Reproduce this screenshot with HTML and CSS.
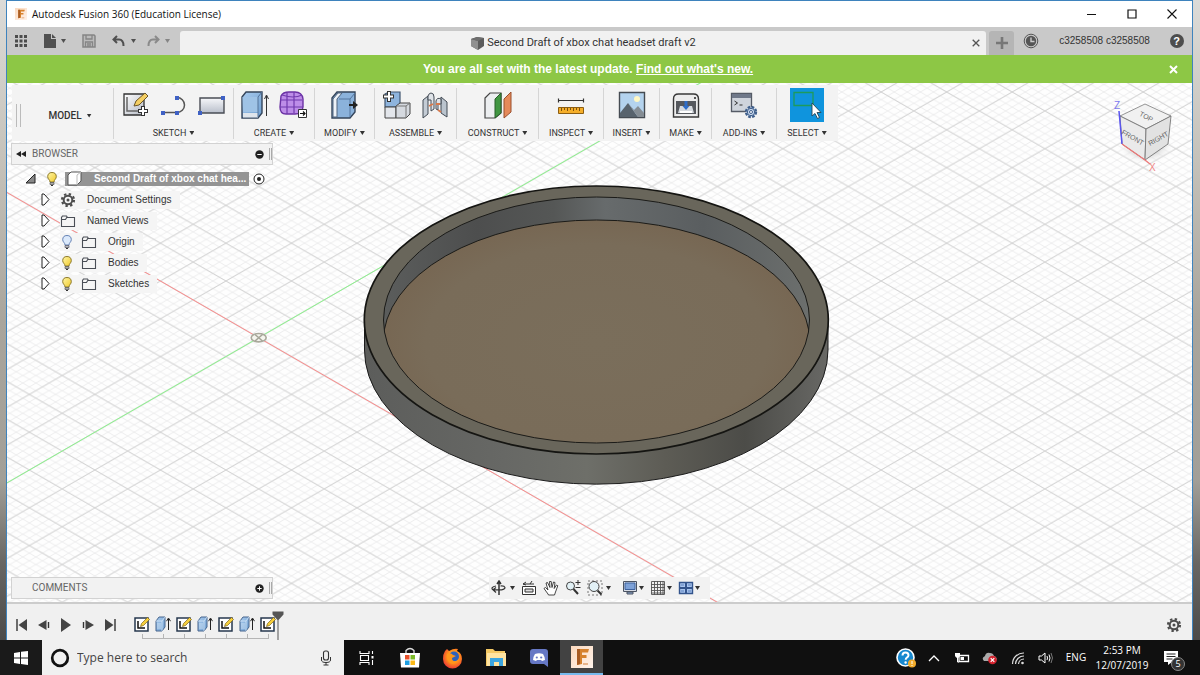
FILE: index.html
```html
<!DOCTYPE html>
<html lang="en">
<head>
<meta charset="utf-8">
<title>Autodesk Fusion 360 (Education License)</title>
<link rel="stylesheet" href="styles.css">
</head>
<body>
<svg class="defs" aria-hidden="true">
  <defs>
    <linearGradient id="gBlue" x1="0" y1="0" x2="1" y2="1"><stop offset="0" stop-color="#a9cbee"/><stop offset="1" stop-color="#6f9fd0"/></linearGradient>
    <linearGradient id="gGrey" x1="0" y1="0" x2="1" y2="1"><stop offset="0" stop-color="#ffffff"/><stop offset="1" stop-color="#b4b9c4"/></linearGradient>
    <linearGradient id="gPanel" x1="0" y1="0" x2="0" y2="1"><stop offset="0" stop-color="#f6f7fa"/><stop offset="1" stop-color="#b9bfcb"/></linearGradient>
    <linearGradient id="gBulb" x1="0" y1="0" x2="1" y2="1"><stop offset="0" stop-color="#fff6a8"/><stop offset="1" stop-color="#f0c929"/></linearGradient>
    <linearGradient id="gFusion" x1="0" y1="0" x2="1" y2="1"><stop offset="0" stop-color="#fbd9bf"/><stop offset="1" stop-color="#fff3ea"/></linearGradient>
    <radialGradient id="gFox" cx=".55" cy=".4" r=".7"><stop offset="0" stop-color="#ffd23c"/><stop offset=".5" stop-color="#ff8a1c"/><stop offset="1" stop-color="#e4203e"/></radialGradient>
  </defs>
  <symbol id="bulb" viewBox="0 0 12 16"><path d="M6 1.500a4.300 4.300 0 0 0-4.300 4.200C1.700 8 4 8.800 4 11h4c0-2.200 2.300-3 2.300-5.300A4.300 4.300 0 0 0 6 1.500z" fill="url(#gBulb)" stroke="#8d7a2a"/><path d="M4 11.500h4v2H4z" fill="#aaa" stroke="#555" stroke-width=".7"/><path d="M5 14.500h2" stroke="#333"/></symbol>
  <symbol id="bulbOff" viewBox="0 0 12 16"><path d="M6 1.500a4.300 4.300 0 0 0-4.300 4.200C1.700 8 4 8.800 4 11h4c0-2.200 2.300-3 2.300-5.300A4.300 4.300 0 0 0 6 1.500z" fill="#dbe9fb" stroke="#6582b5"/><path d="M4 11.500h4v2H4z" fill="#bbb" stroke="#556" stroke-width=".7"/><path d="M5 14.500h2" stroke="#333"/></symbol>
  <symbol id="folder" viewBox="0 0 16 14"><path d="M1.500 12.500v-9l1-1.500h4l1 1.500M1.500 5.500h4l1.200-2h7.800v9h-13z" fill="#f5f5f5" stroke="#4a4e56" stroke-width="1.100"/></symbol>
  <symbol id="closed" viewBox="0 0 9 13"><path d="M1 1h2l5 5.500L3 12H1z" fill="#fff" stroke="#222"/></symbol>
  <symbol id="gear" viewBox="0 0 16 16"><circle cx="8" cy="8" r="6" fill="none" stroke="#4d4d4d" stroke-width="2.200" stroke-dasharray="2.360 2.350"/><circle cx="8" cy="8" r="4.300" fill="none" stroke="#4d4d4d" stroke-width="2"/><circle cx="8" cy="8" r="1.500" fill="#4d4d4d"/></symbol>
  <symbol id="fusion" viewBox="0 0 22 22"><path d="M0 0h22v22H0z" fill="url(#gFusion)"/><path d="M6 3h12l-1 3.500h-6V9h4.500v3H11v6l-5 1z" fill="#d6822e"/><path d="M6 3h3v15l-3 1z" fill="#a85b22"/><path d="M12 17h5v2h-5z" fill="#e8b48a"/></symbol>
  <symbol id="tlSketch" viewBox="0 0 16 16"><path d="M1 2h13v13H1z" fill="#fff" stroke="#26374d" stroke-width="1.500"/><path d="M4 5v7h7" fill="none" stroke="#111" stroke-width="1.500"/><path d="M6.500 10.500l1-3 6-6 2 2-6 6z" fill="#f6ce3b" stroke="#7a631b" stroke-width=".7"/></symbol>
  <symbol id="tlBox" viewBox="0 0 16 16"><path d="M1 5l3-4h6v10l-3 4H1z" fill="url(#gBlue)" stroke="#46658d"/><path d="M1 5h6v10M7 5l3-4M2 8h4m-4 2h4m-4 2h4" fill="none" stroke="#d7e7f7" stroke-width=".8"/><path d="M13.500 14V3m-2 2.200L13.500 2l2 3.200" fill="none" stroke="#222"/></symbol>
</svg>

<div class="desktop">
  <div class="window">
    <header class="titlebar">
      <svg class="app-icon"><use href="#fusion"/></svg>
      <span class="app-name">Autodesk Fusion 360 (Education License)</span>
      <button class="win-btn" aria-label="Minimize"><svg viewBox="0 0 10 10"><path d="M0 5.500h9" stroke="#111"/></svg></button>
      <button class="win-btn" aria-label="Maximize"><svg viewBox="0 0 10 10"><path d="M1 1h8v8H1z" fill="none" stroke="#111" stroke-width="1.200"/></svg></button>
      <button class="win-btn" aria-label="Close"><svg viewBox="0 0 10 10"><path d="M.5.500l9 9m0-9l-9 9" stroke="#111" stroke-width="1.100"/></svg></button>
    </header>

    <div class="tabbar">
      <div class="quick">
        <button class="q" aria-label="Data panel"><svg width="14" height="14" viewBox="0 0 14 14"><path d="M1 1h3v3H1zm4.500 0h3v3h-3zM10 1h3v3h-3zM1 5.500h3v3H1zm4.500 0h3v3h-3zm4.500 0h3v3h-3zM1 10h3v3H1zm4.500 0h3v3h-3zm4.500 0h3v3h-3z" fill="#4c4c4c"/></svg></button>
        <button class="q file" aria-label="File"><svg width="12" height="14" viewBox="0 0 12 14"><path d="M0 0h7v5h5v9H0z" fill="#505050"/><path d="M8 0l4 4H8z" fill="#505050"/></svg><i class="caret"></i></button>
        <button class="q save" aria-label="Save"><svg width="14" height="14" viewBox="0 0 14 14"><path d="M1 1h11l1 1v11H1z" fill="#bbb" stroke="#858585" stroke-width="1.500"/><path d="M4 1v4h6V1M3.500 13V8h7v5M5 10h4m-4 2h4" fill="none" stroke="#858585" stroke-width="1.300"/></svg></button>
        <button class="q undo" aria-label="Undo"><svg width="14" height="12" viewBox="0 0 14 12"><path d="M5 1L1.500 4.500 5 8M1.500 4.500H7c3 0 4.500 2 4.500 6.500" fill="none" stroke="#505050" stroke-width="2"/></svg><i class="caret"></i></button>
        <button class="q redo" aria-label="Redo"><svg width="14" height="12" viewBox="0 0 14 12"><path d="M9 1l3.500 3.500L9 8m3.500-3.500H7c-3 0-4.500 2-4.500 6.500" fill="none" stroke="#8a8a8a" stroke-width="2"/></svg><i class="caret"></i></button>
      </div>
      <div class="doc-tab">
        <svg width="15" height="15" viewBox="0 0 15 15"><path d="M1 3l6-2 7 1v8l-6 4-7-4z" fill="#5c5c5c"/><path d="M1 3l7 2v9l-7-4z" fill="#909090"/><path d="M1 3l6-2 7 1-6 3z" fill="#6e6e6e"/></svg>
        <span class="doc-title">Second Draft of xbox chat headset draft v2</span>
        <button class="tab-close" aria-label="Close tab"><svg width="8" height="8" viewBox="0 0 8 8"><path d="M.7.700l6.600 6.600m0-6.600L.7 7.300" stroke="#555" stroke-width="1.300"/></svg></button>
      </div>
      <button class="new-tab" aria-label="New tab"><svg width="12" height="12" viewBox="0 0 12 12"><path d="M6 0v12M0 6h12" stroke="#777" stroke-width="2.600"/></svg></button>
      <button class="status" aria-label="Job status"><svg width="16" height="16" viewBox="0 0 16 16"><circle cx="8" cy="8" r="6.800" fill="none" stroke="#555"/><circle cx="8" cy="8" r="5.200" fill="#555"/><path d="M8 4.500V8.500h3.500" fill="none" stroke="#ccc" stroke-width="1.400"/></svg></button>
      <button class="account">c3258508 c3258508</button>
      <button class="help" aria-label="Help"><b>?</b></button>
    </div>

    <div class="notice">
      <p>You are all set with the latest update. <a href="#new">Find out what's new.</a></p>
      <button class="notice-close" aria-label="Dismiss"><svg width="9" height="9" viewBox="0 0 9 9"><path d="M1 1l7 7m0-7L1 8" stroke="#fff" stroke-width="2"/></svg></button>
    </div>

    <main class="viewport">
      <svg class="scene" viewBox="7 83 1185 519" preserveAspectRatio="xMidYMid slice" aria-label="Model canvas">
        <defs>
          <pattern id="minor" patternUnits="userSpaceOnUse" x="258.700" y="337.700" width="13.104" height="7.560"><path d="M0 0l13.104 7.560M0 7.560L13.104 0" stroke="#e9e9ea" stroke-width=".8"/></pattern>
          <pattern id="major" patternUnits="userSpaceOnUse" x="258.700" y="337.700" width="65.520" height="37.800"><path d="M0 0l65.520 37.800M0 37.800L65.520 0" stroke="#cfcfcf" stroke-width=".9"/></pattern>
          <linearGradient id="side"><stop offset="0" stop-color="#5c5d5b"/><stop offset=".3" stop-color="#676865"/><stop offset=".48" stop-color="#6e6f69"/><stop offset=".65" stop-color="#5d5c55"/><stop offset=".82" stop-color="#4c4c48"/><stop offset="1" stop-color="#686865"/></linearGradient>
          <linearGradient id="wall"><stop offset="0" stop-color="#5b5d5c"/><stop offset=".22" stop-color="#4d4e4e"/><stop offset=".4" stop-color="#555756"/><stop offset=".52" stop-color="#676b6c"/><stop offset=".75" stop-color="#5a5e60"/><stop offset="1" stop-color="#6c6f6d"/></linearGradient>
          <radialGradient id="floor"><stop offset="0" stop-color="#7a6e5b"/><stop offset=".8" stop-color="#796c59"/><stop offset="1" stop-color="#776753"/></radialGradient>
          <clipPath id="bore"><ellipse cx="596.500" cy="320" rx="213" ry="123"/></clipPath>
        </defs>
        <rect x="-400" y="-400" width="2400" height="1600" fill="#fefefe"/>
        <rect x="-400" y="-400" width="2400" height="1600" fill="url(#minor)"/>
        <rect x="-400" y="-400" width="2400" height="1600" fill="url(#major)"/>
        <path d="M-400-42.300l1520 876.900" stroke="#fb8d8d"/>
        <path d="M-400 717.700L1120-159.200" stroke="#8df38d"/>
        <ellipse cx="258.700" cy="337.700" rx="7.500" ry="4.200" fill="#f5f5ee" stroke="#aaa99c" stroke-width="1.600"/>
        <path d="M255 334.500l7.500 6.500m0-6.500l-7.500 6.500" stroke="#a5a598" stroke-width="1.600"/>
        <path d="M364.500 320V350a231.500 134 0 0 0 463.500 0V320z" fill="url(#side)" stroke="#1c1c1c" stroke-width="1"/>
        <ellipse cx="596.300" cy="320" rx="232" ry="134" fill="#69665b" stroke="#151512" stroke-width="1.700"/>
        <g clip-path="url(#bore)">
          <rect x="383" y="196" width="427" height="248" fill="url(#wall)"/>
          <ellipse cx="596.500" cy="343" rx="213.500" ry="123" fill="url(#floor)" stroke="#1b1b18"/>
        </g>
        <ellipse cx="596.500" cy="320" rx="213" ry="123" fill="none" stroke="#1b1b18"/>
      </svg>

      <svg class="cube" width="64" height="80" viewBox="1112 96 64 80" aria-label="View cube">
        <defs><radialGradient id="shade"><stop offset="0" stop-color="#999"/><stop offset="1" stop-color="#fff" stop-opacity="0"/></radialGradient></defs>
        <ellipse cx="1146" cy="148" rx="29" ry="17" fill="url(#shade)"/>
        <path d="M1120 116l25-12 26 12-25 13z" fill="#f1f1f1" stroke="#888" stroke-width=".9"/>
        <path d="M1120 116l26 13-1 31-23-16z" fill="#eaeaea" stroke="#777" stroke-width=".9"/>
        <path d="M1171 116l-25 13-1 31 23-16z" fill="#e2e2e2" stroke="#777" stroke-width=".9"/>
        <path d="M1119 111l3 33" stroke="#5a55f0" stroke-width="1.500"/>
        <path d="M1122 144l23 16 5 4" fill="none" stroke="#e77" stroke-width="1.200"/>
        <text class="face" x="1133" y="140" text-anchor="middle" transform="rotate(29 1133 137)">FRONT</text>
        <text class="face" x="1158" y="141" text-anchor="middle" transform="rotate(-29 1158 138)">RIGHT</text>
        <text class="face" x="1146" y="119" text-anchor="middle" transform="rotate(27 1146 117)">TOP</text>
        <text class="axis axis-z" x="1114" y="109">Z</text>
        <text class="axis axis-x" x="1149" y="171">X</text>
      </svg>

      <nav class="toolbar" aria-label="Tools">
        <button class="workspace">MODEL<i class="caret"></i></button>
        <div class="group"><div class="icons">
          <svg width="28" height="28" viewBox="0 0 28 28"><path d="M2 3h20v21H2z" fill="url(#gGrey)" stroke="#333" stroke-width="1.300"/><path d="M5 6v14h13" fill="none" stroke="#666" stroke-width="1.500"/><path d="M12 15l2-5 9-8 3 3-9 9z" fill="#f5cf63" stroke="#6b5526"/><path d="M21 15v10m-5-5h10" stroke="#333" stroke-width="4"/><path d="M21 16v8m-4-4h8" stroke="#fff" stroke-width="2"/></svg>
          <svg width="28" height="28" viewBox="0 0 28 28"><path d="M3 21.500h14a7.500 7.500 0 1 0 0-15" fill="none" stroke="#555" stroke-width="1.500"/><path d="M1 20h4v4H1zm14 0h4v4h-4zm0-15h4v4h-4z" fill="#3f61c4"/></svg>
          <svg width="28" height="28" viewBox="0 0 28 28"><path d="M2 7h24v15H2z" fill="url(#gPanel)" stroke="#4a4d55" stroke-width="1.400"/><path d="M23 5h4v4h-4zM0 20h4v4H0z" fill="#3f61c4"/></svg>
        </div><button class="label">SKETCH<i class="caret"></i></button></div>
        <div class="group"><div class="icons">
          <svg width="28" height="28" viewBox="0 0 28 28"><path d="M1 6l4-5h16v21l-4 5H1z" fill="url(#gBlue)" stroke="#34445a" stroke-width="1.400"/><path d="M1.500 6H17v15H2z" fill="#9fc3e6"/><path d="M2 22h15v4.500H2z" fill="#dfe5ec"/><path d="M17 6v20M17 6l4-5" stroke="#537299"/><path d="M25.500 25V5m-2 3l2-4 2 4" fill="none" stroke="#333"/></svg>
          <svg width="28" height="28" viewBox="0 0 28 28"><path d="M2 5q2-4 8-4h6q7 0 8 7v8q-1 7-8 7H7q-6 0-6-7z" fill="#bd8de8" stroke="#6b32a4" stroke-width="1.400"/><path d="M1 9h22M1 16h23M8 2v21M15 1v21M3 4q12 4 20 0" fill="none" stroke="#713aae" stroke-width="1.200"/><path d="M19.500 18.500h8v8h-8z" fill="#fff" stroke="#333"/><path d="M21 22.500h5m-2-2l2 2-2 2" stroke="#111" fill="none" stroke-width="1.200"/></svg>
        </div><button class="label">CREATE<i class="caret"></i></button></div>
        <div class="group"><div class="icons">
          <svg width="28" height="28" viewBox="0 0 28 28"><path d="M1 7l5-6h18v20l-5 6H1z" fill="#8bb2db" stroke="#34445a" stroke-width="1.400"/><path d="M2 8l5-6h4L6 8v18H2z" fill="#edf2f8" stroke="#51657f"/><path d="M8 8h11v18M19 8l5-6" fill="none" stroke="#54779f"/><path d="M18 13h4v-3l5 4-5 4v-3h-4z" fill="#222"/></svg>
        </div><button class="label">MODIFY<i class="caret"></i></button></div>
        <div class="group"><div class="icons">
          <svg width="28" height="28" viewBox="0 0 28 28"><path d="M2 3l4-2h11v15H2z" fill="#8eb4dd" stroke="#405570" stroke-width="1.200"/><path d="M2 16h11v11H2z" fill="#e3e6eb" stroke="#444"/><path d="M13 15l4-3h10v11l-4 4H13z" fill="#d5d9df" stroke="#444"/><path d="M13 15h10v12m0-12l4-3" fill="none" stroke="#777"/><path d="M6 0v11M0 5.500h11" stroke="#333" stroke-width="4"/><path d="M6 1v9M1 5.500h9" stroke="#fff" stroke-width="2"/></svg>
          <svg width="28" height="28" viewBox="0 0 28 28"><path d="M2 9l5-4v18l-5 4z" fill="#c4ccd5" stroke="#434a54"/><path d="M7 5q1-3 3-3 3 0 3 4v12l-3 2V9H7z" fill="#dfe3e8" stroke="#434a54"/><path d="M26 11l-6-5v16l6 4z" fill="#bac4ce" stroke="#434a54"/><path d="M20 8q-4-2-5 2v8l2 1v-6h3z" fill="#dfe3e8" stroke="#434a54"/><path d="M8 15l4-2m3 0h4m-2 6l3 2" stroke="#d8794b" stroke-width="1.800"/></svg>
        </div><button class="label">ASSEMBLE<i class="caret"></i></button></div>
        <div class="group"><div class="icons">
          <svg width="28" height="28" viewBox="0 0 28 28"><path d="M1 7l5-5h11v20l-6 5H1z" fill="#eceef0" stroke="#444" stroke-width="1.200"/><path d="M11 8l6-6v20l-6 5z" fill="#419642" stroke="#285e2a"/><path d="M20 8l7-7v20l-7 6z" fill="#e58a5a" stroke="#9a4e2d"/></svg>
        </div><button class="label">CONSTRUCT<i class="caret"></i></button></div>
        <div class="group"><div class="icons">
          <svg width="28" height="28" viewBox="0 0 28 28"><path d="M1.500 9.500h25m-25-2v4m25-4v4" stroke="#333" stroke-width="1.200"/><path d="M1.500 16.500h25v6h-25z" fill="#f5ae29" stroke="#8c5e12"/><path d="M4.500 17v3m3-3v2m3-2v3m3-3v2m3-2v3m3-3v2m3-2v3" stroke="#7c5210"/></svg>
        </div><button class="label">INSPECT<i class="caret"></i></button></div>
        <div class="group"><div class="icons">
          <svg width="28" height="28" viewBox="0 0 28 28"><path d="M1.500 1.500h25v25h-25z" fill="#b4d3ee" stroke="#454b52" stroke-width="1.400"/><circle cx="19" cy="8" r="3" fill="#fff8c5"/><path d="M2 22l8-10 10 14H2z" fill="#58636d"/><path d="M10 12l10 14h6v-4l-6-7-4 4z" fill="#858d94"/></svg>
        </div><button class="label">INSERT<i class="caret"></i></button></div>
        <div class="group"><div class="icons">
          <svg width="28" height="28" viewBox="0 0 28 28"><path d="M1.500 8q0-5 5-5h15q5 0 5 5v18h-25z" fill="#ececec" stroke="#383838" stroke-width="1.400"/><path d="M4 10h20v13H4z" fill="#55585d"/><path d="M6 22l2-7h12l2 7z" fill="#d5d9de"/><path d="M12.500 10h3v5h2l-3.500 4-3.500-4h2z" fill="#2f6dc7"/><path d="M8 20h12v2H8z" fill="#fff"/><circle cx="23" cy="7" r="1" fill="#222"/></svg>
        </div><button class="label">MAKE<i class="caret"></i></button></div>
        <div class="group"><div class="icons">
          <svg width="28" height="28" viewBox="0 0 28 28"><path d="M1.500 2.500h20v18h-20z" fill="#cfd4dc" stroke="#555b66" stroke-width="1.300"/><path d="M2 3h19v4H2z" fill="#6f7889"/><path d="M4.500 10l3 2-3 2m5 0h3" fill="none" stroke="#333"/><circle cx="21" cy="21" r="5" fill="#c6d6ec" stroke="#41608c" stroke-width="2.400" stroke-dasharray="2.600 1.330"/><circle cx="21" cy="21" r="3.700" fill="#c6d6ec" stroke="#41608c"/><circle cx="21" cy="21" r="1.500" fill="#fff" stroke="#41608c"/></svg>
        </div><button class="label">ADD-INS<i class="caret"></i></button></div>
        <div class="group"><div class="icons">
          <svg width="34" height="34" viewBox="0 0 34 34"><path d="M0 0h34v34H0z" fill="#0f94dd"/><path d="M4 4.500h19v13H4z" fill="none" stroke="#1e9a5c" stroke-width="1.300"/><path d="M22 15v13l3-2.500 2.500 5 2-1-2.500-5h4z" fill="#fff" stroke="#245" stroke-width=".9"/></svg>
        </div><button class="label">SELECT<i class="caret"></i></button></div>
      </nav>

      <section class="browser">
        <header class="panel">
          <svg class="collapse" width="10" height="6" viewBox="0 0 10 6"><path d="M5 0v6L0 3zm5 0v6L5 3z" fill="#222"/></svg>
          <h2>BROWSER</h2>
          <button class="dot" aria-label="Collapse browser"><svg viewBox="0 0 9 9"><circle cx="4.500" cy="4.500" r="4.200" fill="#222"/><path d="M2.300 4.500h4.400" stroke="#fff"/></svg></button>
          <i class="grip"></i>
        </header>
        <ul class="tree">
          <li class="root">
            <svg width="11" height="11" viewBox="0 0 11 11"><path d="M10 1v9H1z" fill="#888" stroke="#222"/></svg>
            <svg class="lamp" width="12" height="16"><use href="#bulb"/></svg>
            <span class="root-name"><svg width="15" height="15" viewBox="0 0 15 15"><path d="M1 4l3-3h10v9l-4 4H1z" fill="#fff" stroke="#555"/><path d="M10 14V4l4-3" fill="none" stroke="#bbb"/></svg><b>Second Draft of xbox chat hea...</b></span>
            <svg width="12" height="12" viewBox="0 0 12 12"><circle cx="6" cy="6" r="5" fill="#fff" stroke="#222"/><circle cx="6" cy="6" r="2" fill="#222"/></svg>
          </li>
          <li><svg width="9" height="13"><use href="#closed"/></svg><span class="node"><svg width="16" height="16"><use href="#gear"/></svg>Document Settings</span></li>
          <li><svg width="9" height="13"><use href="#closed"/></svg><span class="node"><svg width="16" height="14"><use href="#folder"/></svg>Named Views</span></li>
          <li><svg width="9" height="13"><use href="#closed"/></svg><span class="node lit"><svg class="lamp" width="12" height="16"><use href="#bulbOff"/></svg><svg width="16" height="14"><use href="#folder"/></svg>Origin</span></li>
          <li><svg width="9" height="13"><use href="#closed"/></svg><span class="node lit"><svg class="lamp" width="12" height="16"><use href="#bulb"/></svg><svg width="16" height="14"><use href="#folder"/></svg>Bodies</span></li>
          <li><svg width="9" height="13"><use href="#closed"/></svg><span class="node lit"><svg class="lamp" width="12" height="16"><use href="#bulb"/></svg><svg width="16" height="14"><use href="#folder"/></svg>Sketches</span></li>
        </ul>
      </section>

      <div class="bottom">
        <section class="panel comments">
          <h2>COMMENTS</h2>
          <button class="dot" aria-label="Expand comments"><svg viewBox="0 0 9 9"><circle cx="4.500" cy="4.500" r="4.200" fill="#222"/><path d="M2.300 4.500h4.400M4.500 2.300v4.400" stroke="#fff"/></svg></button>
          <i class="grip"></i>
        </section>
        <nav class="navbar" aria-label="View controls">
          <button aria-label="Orbit"><svg width="16" height="16" viewBox="0 0 16 16"><path d="M8 2v13M6 4l2-3 2 3" fill="none" stroke="#333" stroke-width="1.500"/><path d="M9.500 6c5-.5 6.500 3 1 3.800H2M5 6C1 6.500 0 8.500 2 9.800M5 7.500L2 9.800l3 2.700" fill="none" stroke="#333" stroke-width="1.200"/></svg><i class="caret"></i></button>
          <button aria-label="Look at"><svg width="16" height="16" viewBox="0 0 16 16"><path d="M1.500 6.500h13v8h-13z" fill="#fff" stroke="#333"/><path d="M4 9h8v3H4z" fill="#ddd" stroke="#333"/><path d="M2 4h11M5 2L2 4l3 1M9 4l2-3" fill="none" stroke="#333"/></svg></button>
          <button aria-label="Pan"><svg width="16" height="16" viewBox="0 0 16 16"><path d="M5 14L1 8.500l1.500-1L5 10 3 3l1.500-.5L7 7.500 6.500 1.500h1.700L9 7.500 10.500 2l1.500.5-.8 6L13.500 5l1.300.7L12.500 12l-1 3H5.500z" fill="#fff" stroke="#333" stroke-width=".9"/></svg></button>
          <button aria-label="Zoom"><svg width="16" height="16" viewBox="0 0 16 16"><circle cx="5.500" cy="6" r="4" fill="#e2f1f6" stroke="#444"/><path d="M8.500 9l4.500 5" stroke="#333" stroke-width="2"/><path d="M13 0v5m-2.500-2.500h5m-5 5h5" stroke="#333"/></svg></button>
          <button aria-label="Fit"><svg width="16" height="16" viewBox="0 0 16 16"><path d="M1 1h14v14H1z" fill="none" stroke="#777" stroke-dasharray="2 2"/><circle cx="7" cy="6.500" r="5" fill="#e2f1f6" stroke="#444"/><path d="M10.500 10.500l4 4" stroke="#333" stroke-width="2"/></svg><i class="caret"></i></button>
          <button class="tight apart" aria-label="Display settings"><svg width="16" height="16" viewBox="0 0 16 16"><path d="M1.500 1.500h13v10h-13z" fill="#d7dce5" stroke="#4c5463"/><path d="M3 3h10v6.500H3z" fill="#7ea2d8" stroke="#3d629e"/><path d="M5 12h6v2H5z" fill="#8ba6ce" stroke="#4c5463"/></svg><i class="caret"></i></button>
          <button class="tight" aria-label="Grid and snaps"><svg width="16" height="16" viewBox="0 0 16 16"><path d="M1.500 1.500h13v13h-13zM4.500 1v14M7.500 1v14M10.500 1v14M1 4.500h14M1 7.500h14M1 10.500h14M13 1v14M1 13h14" fill="none" stroke="#555" stroke-width=".9"/></svg><i class="caret"></i></button>
          <button class="tight" aria-label="Viewports"><svg width="16" height="16" viewBox="0 0 16 16"><path d="M1.500 2.500h13v11h-13z" fill="#a9c5ef" stroke="#33548c" stroke-width="1.400"/><path d="M8 2v12M1 8h14" stroke="#33548c" stroke-width="2"/><path d="M3 5h3m4 0h3m-10 6h3m4 0h3" stroke="#5b80bb"/></svg><i class="caret"></i></button>
        </nav>
      </div>
    </main>

    <footer class="timeline">
      <div class="player">
        <button aria-label="Go to start"><svg width="12" height="12" viewBox="0 0 12 12"><path d="M1 0v12" stroke="#333" stroke-width="1.400"/><path d="M11 0v12L2.500 6z" fill="#444"/></svg></button>
        <button aria-label="Step back"><svg width="12" height="12" viewBox="0 0 12 12"><path d="M8.500 1v10L0 6z" fill="#444"/><path d="M10.500 3v6" stroke="#333" stroke-width="1.400"/></svg></button>
        <button aria-label="Play"><svg width="12" height="14" viewBox="0 0 12 14"><path d="M1 0v14l10-7z" fill="#444"/></svg></button>
        <button aria-label="Step forward"><svg width="12" height="12" viewBox="0 0 12 12"><path d="M3.500 1v10L12 6z" fill="#444"/><path d="M1.500 3v6" stroke="#333" stroke-width="1.400"/></svg></button>
        <button aria-label="Go to end"><svg width="12" height="12" viewBox="0 0 12 12"><path d="M11 0v12" stroke="#333" stroke-width="1.400"/><path d="M1 0v12l8.500-6z" fill="#444"/></svg></button>
      </div>
      <div class="history">
        <ol class="features">
          <li><svg><use href="#tlSketch"/></svg></li><li><svg><use href="#tlBox"/></svg></li>
          <li><svg><use href="#tlSketch"/></svg></li><li><svg><use href="#tlBox"/></svg></li>
          <li><svg><use href="#tlSketch"/></svg></li><li><svg><use href="#tlBox"/></svg></li>
          <li><svg><use href="#tlSketch"/></svg></li>
        </ol>
        <svg class="marker" width="12" height="29" viewBox="0 0 12 29"><path d="M.5.500h11v3L6.500 9V29h-1V9L.5 3.500z" fill="#555"/></svg>
      </div>
      <button class="prefs" aria-label="Timeline settings"><svg width="16" height="16"><use href="#gear"/></svg></button>
    </footer>
  </div>
</div>

<div class="taskbar">
  <button class="start" aria-label="Start"><svg width="16" height="16" viewBox="0 0 16 16"><path d="M1 3l6-1v5.500H1zm7-1.200L15 1v6.500H8zM1 8.500h6V14l-6-1zm7 0h7V15l-7-1z" fill="#fff"/></svg></button>
  <label class="search">
    <svg width="20" height="20" viewBox="0 0 20 20"><circle cx="10" cy="10" r="7.800" fill="none" stroke="#111" stroke-width="2.700"/></svg>
    <input type="text" placeholder="Type here to search" aria-label="Search">
    <svg width="12" height="16" viewBox="0 0 12 16"><rect x="3.500" y="1" width="5" height="9" rx="2" fill="none" stroke="#333" stroke-width="1.100"/><path d="M1.500 7v3q0 2.500 4.500 2.500t4.500-2.500V7M6 12.500V15M3.500 15h5" fill="none" stroke="#333"/></svg>
  </label>
  <div class="apps">
    <button aria-label="Task view"><svg width="18" height="18" viewBox="0 0 18 18"><path d="M2 2v2.500h9V2M2 16v-2.500h9V16M2.500 6.500h8v5h-8zM14.500 2v3m0 6v5" fill="none" stroke="#fff" stroke-width="1.100"/><path d="M13.500 7h2v2.500h-2z" fill="#fff"/></svg></button>
    <button aria-label="Store"><svg width="22" height="22" viewBox="0 0 22 22"><path d="M7 6V3.500q4-4 8 0V6" fill="none" stroke="#ddd" stroke-width="1.300"/><path d="M1 6h20l-1 14.500H2z" fill="#fff"/><path d="M6 8h4.500v4.500H6z" fill="#e8502a"/><path d="M11.500 8H16v4.500h-4.500z" fill="#7cba28"/><path d="M6 13.500h4.500V18H6z" fill="#1d9fe2"/><path d="M11.500 13.500H16V18h-4.500z" fill="#fbb917"/></svg></button>
    <button aria-label="Firefox"><svg width="22" height="22" viewBox="0 0 22 22"><path d="M3 4l2-2 2 2q5-3 9-2l-1 2q5 2 5 8a9.500 9.500 0 0 1-19 0Q1 7 3 4z" fill="url(#gFox)"/><circle cx="12" cy="9.500" r="5" fill="#2d62bd"/><path d="M5 7q4-2 6 1l3 1-4 2q0 4 5 3-3 4-7 2-4-3-3-9z" fill="#ff971c"/></svg></button>
    <button aria-label="File Explorer"><svg width="22" height="20" viewBox="0 0 22 20"><path d="M1 1h7l2 2h10v15H1z" fill="#f4c864"/><path d="M2 5h19v13H2z" fill="#ffe3a0"/><path d="M5 10h13v8h-4v-4H9v4H5z" fill="#3ba5df"/></svg></button>
    <button aria-label="Discord"><svg width="20" height="20" viewBox="0 0 20 20"><path d="M4 1h12q3 0 3 3v15l-4-3H4q-3 0-3-3V4q0-3 3-3z" fill="#6678c5"/><path d="M6 6q4-1.500 8 0 2 3 2 6l-3 1-1-1H8l-1 1-3-1q0-3 2-6z" fill="#fff"/><circle cx="7.800" cy="9.500" r="1.100" fill="#6678c5"/><circle cx="12.200" cy="9.500" r="1.100" fill="#6678c5"/></svg></button>
    <button class="running" aria-label="Fusion 360"><svg width="22" height="22"><use href="#fusion"/></svg></button>
  </div>
  <div class="tray">
    <button aria-label="Get help"><svg width="20" height="20" viewBox="0 0 20 20"><circle cx="9.500" cy="9.500" r="8.500" fill="#1788cf" stroke="#fff" stroke-width="1.600"/><path d="M6.500 7.500q0-3 3-3t3 2.800q0 1.500-1.500 2.200-1.300.8-1.300 2.300" fill="none" stroke="#fff" stroke-width="2"/><circle cx="9.600" cy="14.500" r="1.200" fill="#fff"/><circle cx="16" cy="15.500" r="4" fill="#f2ac2c"/><path d="M16 13v3m0 1v1" stroke="#fff"/></svg></button>
    <button aria-label="Show hidden icons"><svg width="12" height="8" viewBox="0 0 12 8"><path d="M1 7l5-5 5 5" fill="none" stroke="#fff" stroke-width="1.300"/></svg></button>
    <button aria-label="Battery"><svg width="16" height="12" viewBox="0 0 16 12"><path d="M5 3.500h9.500v6H5z" fill="none" stroke="#fff" stroke-width="1.300"/><path d="M6.500 5H10v3H6.500zM1 1h5v3q-1 2-2.500 2T1 4z" fill="#fff"/><path d="M3.500 5v5H5" stroke="#fff" fill="none"/></svg></button>
    <button aria-label="OneDrive"><svg width="16" height="14" viewBox="0 0 16 14"><path d="M2 10q-3-3 1-5 1-4 5-3 3 0 4 3 4 1 2 5z" fill="#aaa"/><circle cx="10.500" cy="9" r="4.300" fill="#d4222e"/><path d="M8.700 7.200l3.600 3.600m0-3.600l-3.600 3.600" stroke="#fff" stroke-width="1.200"/></svg></button>
    <button aria-label="Network"><svg width="14" height="14" viewBox="0 0 14 14"><path d="M1.500 13A11 11 0 0 1 13 2M4.500 13A8.500 8.500 0 0 1 13 5M7.500 13A5.500 5.500 0 0 1 13 8" fill="none" stroke="#ddd" stroke-width="1.200"/><circle cx="11.500" cy="12" r="1.300" fill="#ddd"/></svg></button>
    <button aria-label="Volume"><svg width="16" height="12" viewBox="0 0 16 12"><path d="M1 4h2.500L7 1v10L3.500 8H1z" fill="none" stroke="#fff"/><path d="M9 4q1 2 0 4m2-5.500q2 3.500 0 7" fill="none" stroke="#fff"/><path d="M13 1q3 5 0 10" fill="none" stroke="#777"/></svg></button>
    <button class="lang">ENG</button>
    <button class="clock"><time>2:53 PM</time><time>12/07/2019</time></button>
    <button class="alerts" aria-label="5 notifications"><svg width="16" height="16" viewBox="0 0 16 16"><path d="M1 1h14v11H9l-4 3v-3H1z" fill="#fff"/><path d="M3.500 4h9m-9 2.500h9m-9 2.500h6" stroke="#222"/></svg><span class="badge">5</span></button>
  </div>
</div>
</body>
</html>
```
FILE: styles.css
```css
* { box-sizing: border-box; }
body {
  margin: 0;
  height: 100vh;
  display: flex;
  flex-direction: column;
  overflow: hidden;
  font: 10px/12px "Liberation Sans", Arial, sans-serif;
  color: #333;
}
button {
  display: inline-flex;
  align-items: center;
  justify-content: center;
  padding: 0;
  border: 0;
  background: none;
  color: inherit;
  font: inherit;
}
svg { display: block; flex: none; }
h2, p, ul, ol { margin: 0; padding: 0; }
ul, ol { list-style: none; }
.defs { position: absolute; width: 0; height: 0; }
.caret {
  width: 5px;
  height: 4px;
  flex: none;
  background: currentColor;
  clip-path: polygon(0 0, 100% 0, 50% 100%);
}

.desktop {
  flex: 1;
  min-height: 0;
  display: flex;
  padding: 0 7px 0 6px;
  background: linear-gradient(#dcdbd8, #c5c2ba 25%, #a9a59c 50%, #a29f98 75%, #686663 88%, #4b4a49);
}
.window {
  flex: 1;
  min-width: 0;
  display: flex;
  flex-direction: column;
  border: 1px solid #3e83bd;
  border-bottom: 0;
  background: #f0f0f0;
}

.titlebar {
  flex: none;
  display: flex;
  align-items: center;
  height: 26px;
  background: #fff;
  color: #111;
  font: 10px/16px "Open Sans", "Noto Sans", sans-serif;
}
.app-icon { width: 12px; height: 12px; margin: 0 5px 0 8px; }
.app-name { flex: 1; }
.win-btn { width: 40px; height: 26px; }
.win-btn svg { width: 10px; height: 10px; }

.tabbar {
  flex: none;
  display: flex;
  align-items: flex-end;
  height: 28px;
  background: #c9c9c9;
}
.quick { flex: none; display: flex; align-items: center; width: 173px; height: 28px; padding-left: 7px; color: #505050; }
.q { gap: 5px; }
.q.file { margin-left: 16px; }
.q.save { margin-left: 16px; color: #858585; }
.q.undo { margin-left: 16px; }
.q.redo { margin-left: 10px; color: #858585; }
.doc-tab {
  flex: 1;
  display: flex;
  align-items: center;
  justify-content: center;
  gap: 2px;
  height: 24px;
  position: relative;
  border-radius: 3px 3px 0 0;
  background: #f1f1f1;
  color: #333;
}
.doc-title { font: 11px/14px Roboto, sans-serif; }
.tab-close { position: absolute; right: 6px; top: 8px; }
.new-tab { width: 25px; height: 24px; margin-left: 3px; border-radius: 3px 3px 0 0; background: #b5b5b5; }
.status { width: 34px; height: 28px; }
.account { width: 113px; height: 28px; }
.help { width: 31px; height: 28px; }
.help b { width: 14px; height: 14px; border-radius: 50%; background: #4d4d4d; color: #fff; font-size: 11px; line-height: 14px; }

.notice {
  flex: none;
  display: flex;
  align-items: center;
  height: 28px;
  padding-right: 14px;
  background: #8dc745;
  color: #fff;
  font-weight: bold;
  font-size: 12px;
}
.notice p { flex: 1; text-align: center; }
.notice a { color: inherit; }

.viewport {
  flex: 1;
  min-height: 0;
  display: flex;
  flex-direction: column;
  position: relative;
  border-bottom: 2px solid #ccc;
}
.scene { position: absolute; inset: 0; width: 100%; height: 100%; }
.cube { position: absolute; right: 16px; top: 13px; }
.face { font-size: 7px; fill: #666; }
.axis { font-size: 10px; }
.axis-z { fill: #7c78ee; }
.axis-x { fill: #ee8585; }

.toolbar {
  position: relative;
  flex: none;
  display: grid;
  grid-template-columns: 106px 120px 81px 60px 82px 82px 65px 56px 52px 65px 61px;
  height: 60px;
  padding: 5px 0;
  font: 10px/12px Roboto, sans-serif;
}
.toolbar::before { content: ""; position: absolute; inset: 2px auto 2px 5px; width: 826px; background: #f3f3f3; }
.toolbar > * { position: relative; }
.workspace { gap: 5px; margin: 16px 0 12px 9px; border-left: 1px solid #bbb; padding-left: 10px; font-weight: 500; }
.workspace::before { content: ""; position: absolute; left: 3px; top: 0; bottom: 0; width: 1px; background: #bbb; }
.group { display: flex; flex-direction: column; align-items: center; border-left: 1px solid #d5d5d5; }
.icons { display: flex; align-items: center; justify-content: center; gap: 10px; height: 34px; }
.label { gap: 3px; margin-top: 5px; font-size: 9px; }

.browser { position: relative; width: 262px; margin-left: 4px; }
.panel {
  display: flex;
  align-items: center;
  height: 22px;
  padding-left: 4px;
  border: 1px solid #d2d2d2;
  background: #f2f2f2;
}
.panel h2 { flex: 1; font: 10px/12px Roboto, sans-serif; color: #666; }
.collapse { margin-right: 6px; }
.dot svg { width: 9px; height: 9px; }
.grip { width: 3px; height: 12px; margin-left: 5px; border: solid #aaa; border-width: 0 1px; }
.tree { padding-top: 3px; }
.tree li { display: flex; align-items: center; height: 21px; padding-left: 30px; gap: 10px; }
.tree .root { padding-left: 14px; }
.root .lamp { margin-right: -3px; }
.root-name { display: flex; align-items: center; gap: 12px; width: 184px; height: 14px; padding-left: 2px; margin-right: -6px; background: #949494; color: #fff; }
.root-name b { white-space: nowrap; }
.node { display: flex; align-items: center; gap: 11px; height: 18px; padding-right: 8px; background: #f5f5f5; }
.lit .lamp { margin: 0 -3px 0 1px; }

.bottom {
  position: relative;
  display: grid;
  grid-template-columns: 1fr auto 1fr;
  margin-top: auto;
  padding-bottom: 3px;
}
.comments { width: 262px; margin-left: 4px; padding-left: 20px; }
.navbar { display: flex; align-items: center; height: 22px; padding: 0 10px 0 2px; gap: 6px; background: #f2f2f2; }
.navbar button { gap: 3px; }
.navbar .tight { gap: 1px; }
.navbar .apart { margin-left: 5px; }

.timeline { flex: none; display: flex; align-items: center; height: 36px; padding: 5px 10px 0 9px; }
.player { display: flex; gap: 10px; }
.history { position: relative; margin-left: 18px; }
.features { display: flex; gap: 5px; }
.features li { position: relative; width: 16px; height: 31px; padding-top: 7px; }
.features li svg { width: 16px; height: 16px; }
.features li::after { content: ""; position: absolute; left: 8px; bottom: 1px; width: 1px; height: 5px; background: #b5b5b5; }
.features li:not(:last-child)::before { content: ""; position: absolute; left: 8px; bottom: 1px; width: 21px; height: 1px; background: #b5b5b5; }
.marker { position: absolute; right: -8px; top: 2px; }
.prefs { margin-left: auto; }

.taskbar {
  flex: none;
  display: flex;
  height: 35px;
  background: #101010;
  color: #fff;
  font: 10px/15px "Open Sans", "Noto Sans", sans-serif;
}
.start { width: 42px; background: #1a1a1a; }
.search { width: 302px; display: flex; align-items: center; padding: 0 12px 0 8px; background: #f0f0f0; }
.search input { flex: 1; min-width: 0; margin-left: 7px; padding: 0; border: 0; outline: 0; background: none; font: 12px/18px "Open Sans", "Noto Sans", sans-serif; }
.search input::placeholder { color: #444; opacity: 1; }
.apps { display: flex; padding-left: 1px; }
.apps button { width: 43px; }
.apps .running { background: #424242; border-bottom: 2px solid #76b9ed; }
.tray { display: flex; margin-left: auto; padding-right: 10px; }
.tray button { width: 28px; }
.tray .lang { width: 32px; }
.tray .clock { flex-direction: column; width: 60px; }
.tray .alerts { position: relative; width: 38px; }
.badge {
  position: absolute;
  right: 5px;
  bottom: 4px;
  width: 14px;
  height: 14px;
  border: 1px solid #888;
  border-radius: 50%;
  background: #333;
  font-size: 9px;
  line-height: 12px;
  text-align: center;
}
```
